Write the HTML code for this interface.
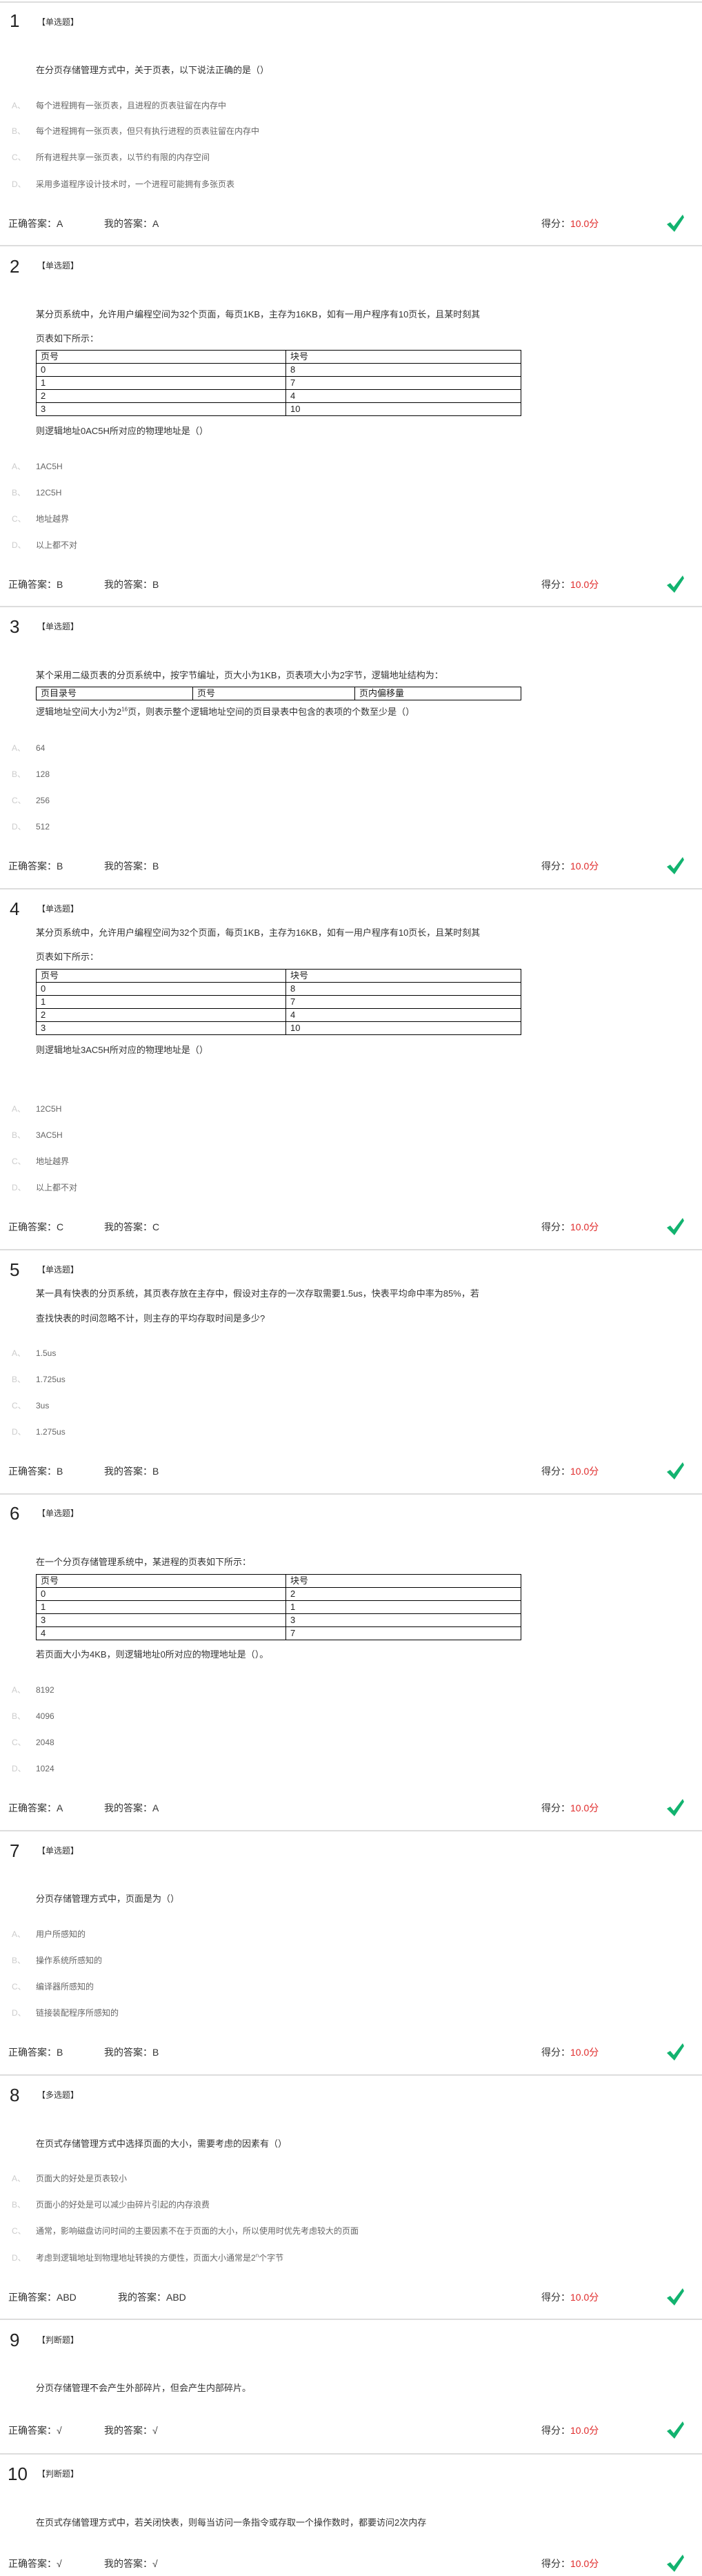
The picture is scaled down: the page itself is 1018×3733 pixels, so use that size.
<!DOCTYPE html>
<html><head><meta charset="utf-8"><style>
body{margin:0;width:1018px;height:3733px;position:relative;background:#fff;font-family:"Liberation Sans","Noto Sans CJK SC",sans-serif;color:#333;overflow:hidden}
.a{position:absolute;white-space:nowrap;line-height:20px}
.n{position:absolute;left:14px;font-size:26px;line-height:30px;color:#222}
.h{position:absolute;left:54px;font-size:12px;line-height:20px;color:#333}
.q{position:absolute;left:52px;font-size:13px;line-height:20px;color:#333;white-space:nowrap}
.ol{position:absolute;left:17px;font-size:12px;line-height:20px;color:#ccc}
.ot{position:absolute;left:52px;font-size:12px;line-height:20px;color:#666;white-space:nowrap}
.f{position:absolute;font-size:14px;line-height:20px;color:#333;white-space:nowrap}
.r{color:#e02a2a}
.sep{position:absolute;left:0;width:1018px;height:2px;background:#ddd}
.ck{position:absolute;left:967px;width:26px;height:26px}
table{position:absolute;left:52px;width:704px;border-collapse:collapse;font-size:13px}
td{border:1px solid #000;height:18px;padding:0 0 0 6px;line-height:18px;color:#222}
sup{font-size:8px;line-height:0}
</style></head><body>

<div class="sep" style="top:2px"></div>
<div class="n" style="top:15px">1</div><div class="h" style="top:22px">【单选题】</div>
<div class="q" style="top:92px">在分页存储管理方式中，关于页表，以下说法正确的是（）</div>
<div class="ol" style="top:143px">A、</div><div class="ot" style="top:143px">每个进程拥有一张页表，且进程的页表驻留在内存中</div>
<div class="ol" style="top:180px">B、</div><div class="ot" style="top:180px">每个进程拥有一张页表，但只有执行进程的页表驻留在内存中</div>
<div class="ol" style="top:218px">C、</div><div class="ot" style="top:218px">所有进程共享一张页表，以节约有限的内存空间</div>
<div class="ol" style="top:257px">D、</div><div class="ot" style="top:257px">采用多道程序设计技术时，一个进程可能拥有多张页表</div>
<div class="f" style="left:12px;top:314px">正确答案：A</div><div class="f" style="left:151px;top:314px">我的答案：A</div>
<div class="f" style="left:785px;top:314px">得分：<span class="r">10.0分</span></div>
<svg class="ck" style="top:311px" viewBox="0 0 26 26"><path d="M0 14 L5 11 L10 17 L23 0 L25 4 L11 25 Z" fill="#12b36f"/></svg>

<div class="sep" style="top:355px"></div>
<div class="n" style="top:371px">2</div><div class="h" style="top:375px">【单选题】</div>
<div class="q" style="top:446px">某分页系统中，允许用户编程空间为32个页面，每页1KB，主存为16KB，如有一用户程序有10页长，且某时刻其</div>
<div class="q" style="top:481px">页表如下所示：</div>
<table style="top:507px"><tr><td style="width:355px">页号</td><td>块号</td></tr><tr><td>0</td><td>8</td></tr><tr><td>1</td><td>7</td></tr><tr><td>2</td><td>4</td></tr><tr><td>3</td><td>10</td></tr></table>
<div class="q" style="top:615px">则逻辑地址0AC5H所对应的物理地址是（）</div>
<div class="ol" style="top:666px">A、</div><div class="ot" style="top:666px">1AC5H</div>
<div class="ol" style="top:704px">B、</div><div class="ot" style="top:704px">12C5H</div>
<div class="ol" style="top:742px">C、</div><div class="ot" style="top:742px">地址越界</div>
<div class="ol" style="top:780px">D、</div><div class="ot" style="top:780px">以上都不对</div>
<div class="f" style="left:12px;top:837px">正确答案：B</div><div class="f" style="left:151px;top:837px">我的答案：B</div>
<div class="f" style="left:785px;top:837px">得分：<span class="r">10.0分</span></div>
<svg class="ck" style="top:834px" viewBox="0 0 26 26"><path d="M0 14 L5 11 L10 17 L23 0 L25 4 L11 25 Z" fill="#12b36f"/></svg>

<div class="sep" style="top:878px"></div>
<div class="n" style="top:893px">3</div><div class="h" style="top:898px">【单选题】</div>
<div class="q" style="top:969px">某个采用二级页表的分页系统中，按字节编址，页大小为1KB，页表项大小为2字节，逻辑地址结构为：</div>
<table style="top:995px"><tr><td style="width:220px">页目录号</td><td style="width:228px">页号</td><td>页内偏移量</td></tr></table>
<div class="q" style="top:1022px">逻辑地址空间大小为2<sup>16</sup>页，则表示整个逻辑地址空间的页目录表中包含的表项的个数至少是（）</div>
<div class="ol" style="top:1074px">A、</div><div class="ot" style="top:1074px">64</div>
<div class="ol" style="top:1112px">B、</div><div class="ot" style="top:1112px">128</div>
<div class="ol" style="top:1150px">C、</div><div class="ot" style="top:1150px">256</div>
<div class="ol" style="top:1188px">D、</div><div class="ot" style="top:1188px">512</div>
<div class="f" style="left:12px;top:1245px">正确答案：B</div><div class="f" style="left:151px;top:1245px">我的答案：B</div>
<div class="f" style="left:785px;top:1245px">得分：<span class="r">10.0分</span></div>
<svg class="ck" style="top:1242px" viewBox="0 0 26 26"><path d="M0 14 L5 11 L10 17 L23 0 L25 4 L11 25 Z" fill="#12b36f"/></svg>

<div class="sep" style="top:1287px"></div>
<div class="n" style="top:1302px">4</div><div class="h" style="top:1307px">【单选题】</div>
<div class="q" style="top:1342px">某分页系统中，允许用户编程空间为32个页面，每页1KB，主存为16KB，如有一用户程序有10页长，且某时刻其</div>
<div class="q" style="top:1377px">页表如下所示：</div>
<table style="top:1404px"><tr><td style="width:355px">页号</td><td>块号</td></tr><tr><td>0</td><td>8</td></tr><tr><td>1</td><td>7</td></tr><tr><td>2</td><td>4</td></tr><tr><td>3</td><td>10</td></tr></table>
<div class="q" style="top:1512px">则逻辑地址3AC5H所对应的物理地址是（）</div>
<div class="ol" style="top:1597px">A、</div><div class="ot" style="top:1597px">12C5H</div>
<div class="ol" style="top:1635px">B、</div><div class="ot" style="top:1635px">3AC5H</div>
<div class="ol" style="top:1673px">C、</div><div class="ot" style="top:1673px">地址越界</div>
<div class="ol" style="top:1711px">D、</div><div class="ot" style="top:1711px">以上都不对</div>
<div class="f" style="left:12px;top:1768px">正确答案：C</div><div class="f" style="left:151px;top:1768px">我的答案：C</div>
<div class="f" style="left:785px;top:1768px">得分：<span class="r">10.0分</span></div>
<svg class="ck" style="top:1765px" viewBox="0 0 26 26"><path d="M0 14 L5 11 L10 17 L23 0 L25 4 L11 25 Z" fill="#12b36f"/></svg>

<div class="sep" style="top:1810px"></div>
<div class="n" style="top:1825px">5</div><div class="h" style="top:1830px">【单选题】</div>
<div class="q" style="top:1865px">某一具有快表的分页系统，其页表存放在主存中，假设对主存的一次存取需要1.5us，快表平均命中率为85%，若</div>
<div class="q" style="top:1901px">查找快表的时间忽略不计，则主存的平均存取时间是多少?</div>
<div class="ol" style="top:1951px">A、</div><div class="ot" style="top:1951px">1.5us</div>
<div class="ol" style="top:1989px">B、</div><div class="ot" style="top:1989px">1.725us</div>
<div class="ol" style="top:2027px">C、</div><div class="ot" style="top:2027px">3us</div>
<div class="ol" style="top:2065px">D、</div><div class="ot" style="top:2065px">1.275us</div>
<div class="f" style="left:12px;top:2122px">正确答案：B</div><div class="f" style="left:151px;top:2122px">我的答案：B</div>
<div class="f" style="left:785px;top:2122px">得分：<span class="r">10.0分</span></div>
<svg class="ck" style="top:2119px" viewBox="0 0 26 26"><path d="M0 14 L5 11 L10 17 L23 0 L25 4 L11 25 Z" fill="#12b36f"/></svg>

<div class="sep" style="top:2164px"></div>
<div class="n" style="top:2178px">6</div><div class="h" style="top:2183px">【单选题】</div>
<div class="q" style="top:2254px">在一个分页存储管理系统中，某进程的页表如下所示：</div>
<table style="top:2281px"><tr><td style="width:355px">页号</td><td>块号</td></tr><tr><td>0</td><td>2</td></tr><tr><td>1</td><td>1</td></tr><tr><td>3</td><td>3</td></tr><tr><td>4</td><td>7</td></tr></table>
<div class="q" style="top:2388px">若页面大小为4KB，则逻辑地址0所对应的物理地址是（）。</div>
<div class="ol" style="top:2439px">A、</div><div class="ot" style="top:2439px">8192</div>
<div class="ol" style="top:2477px">B、</div><div class="ot" style="top:2477px">4096</div>
<div class="ol" style="top:2515px">C、</div><div class="ot" style="top:2515px">2048</div>
<div class="ol" style="top:2553px">D、</div><div class="ot" style="top:2553px">1024</div>
<div class="f" style="left:12px;top:2610px">正确答案：A</div><div class="f" style="left:151px;top:2610px">我的答案：A</div>
<div class="f" style="left:785px;top:2610px">得分：<span class="r">10.0分</span></div>
<svg class="ck" style="top:2607px" viewBox="0 0 26 26"><path d="M0 14 L5 11 L10 17 L23 0 L25 4 L11 25 Z" fill="#12b36f"/></svg>

<div class="sep" style="top:2652px"></div>
<div class="n" style="top:2667px">7</div><div class="h" style="top:2672px">【单选题】</div>
<div class="q" style="top:2742px">分页存储管理方式中，页面是为（）</div>
<div class="ol" style="top:2793px">A、</div><div class="ot" style="top:2793px">用户所感知的</div>
<div class="ol" style="top:2831px">B、</div><div class="ot" style="top:2831px">操作系统所感知的</div>
<div class="ol" style="top:2869px">C、</div><div class="ot" style="top:2869px">编译器所感知的</div>
<div class="ol" style="top:2907px">D、</div><div class="ot" style="top:2907px">链接装配程序所感知的</div>
<div class="f" style="left:12px;top:2964px">正确答案：B</div><div class="f" style="left:151px;top:2964px">我的答案：B</div>
<div class="f" style="left:785px;top:2964px">得分：<span class="r">10.0分</span></div>
<svg class="ck" style="top:2961px" viewBox="0 0 26 26"><path d="M0 14 L5 11 L10 17 L23 0 L25 4 L11 25 Z" fill="#12b36f"/></svg>

<div class="sep" style="top:3006px"></div>
<div class="n" style="top:3021px">8</div><div class="h" style="top:3026px">【多选题】</div>
<div class="q" style="top:3097px">在页式存储管理方式中选择页面的大小，需要考虑的因素有（）</div>
<div class="ol" style="top:3147px">A、</div><div class="ot" style="top:3147px">页面大的好处是页表较小</div>
<div class="ol" style="top:3185px">B、</div><div class="ot" style="top:3185px">页面小的好处是可以减少由碎片引起的内存浪费</div>
<div class="ol" style="top:3223px">C、</div><div class="ot" style="top:3223px">通常，影响磁盘访问时间的主要因素不在于页面的大小，所以使用时优先考虑较大的页面</div>
<div class="ol" style="top:3262px">D、</div><div class="ot" style="top:3262px">考虑到逻辑地址到物理地址转换的方便性，页面大小通常是2<sup>n</sup>个字节</div>
<div class="f" style="left:12px;top:3319px">正确答案：ABD</div><div class="f" style="left:171px;top:3319px">我的答案：ABD</div>
<div class="f" style="left:785px;top:3319px">得分：<span class="r">10.0分</span></div>
<svg class="ck" style="top:3316px" viewBox="0 0 26 26"><path d="M0 14 L5 11 L10 17 L23 0 L25 4 L11 25 Z" fill="#12b36f"/></svg>

<div class="sep" style="top:3360px"></div>
<div class="n" style="top:3376px">9</div><div class="h" style="top:3381px">【判断题】</div>
<div class="q" style="top:3451px">分页存储管理不会产生外部碎片，但会产生内部碎片。</div>
<div class="f" style="left:12px;top:3512px">正确答案：√</div><div class="f" style="left:151px;top:3512px">我的答案：√</div>
<div class="f" style="left:785px;top:3512px">得分：<span class="r">10.0分</span></div>
<svg class="ck" style="top:3509px" viewBox="0 0 26 26"><path d="M0 14 L5 11 L10 17 L23 0 L25 4 L11 25 Z" fill="#12b36f"/></svg>

<div class="sep" style="top:3555px"></div>
<div class="n" style="top:3570px;left:11px">10</div><div class="h" style="top:3575px">【判断题】</div>
<div class="q" style="top:3646px">在页式存储管理方式中，若关闭快表，则每当访问一条指令或存取一个操作数时，都要访问2次内存</div>
<div class="f" style="left:12px;top:3705px">正确答案：√</div><div class="f" style="left:151px;top:3705px">我的答案：√</div>
<div class="f" style="left:785px;top:3705px">得分：<span class="r">10.0分</span></div>
<svg class="ck" style="top:3702px" viewBox="0 0 26 26"><path d="M0 14 L5 11 L10 17 L23 0 L25 4 L11 25 Z" fill="#12b36f"/></svg>

</body></html>
